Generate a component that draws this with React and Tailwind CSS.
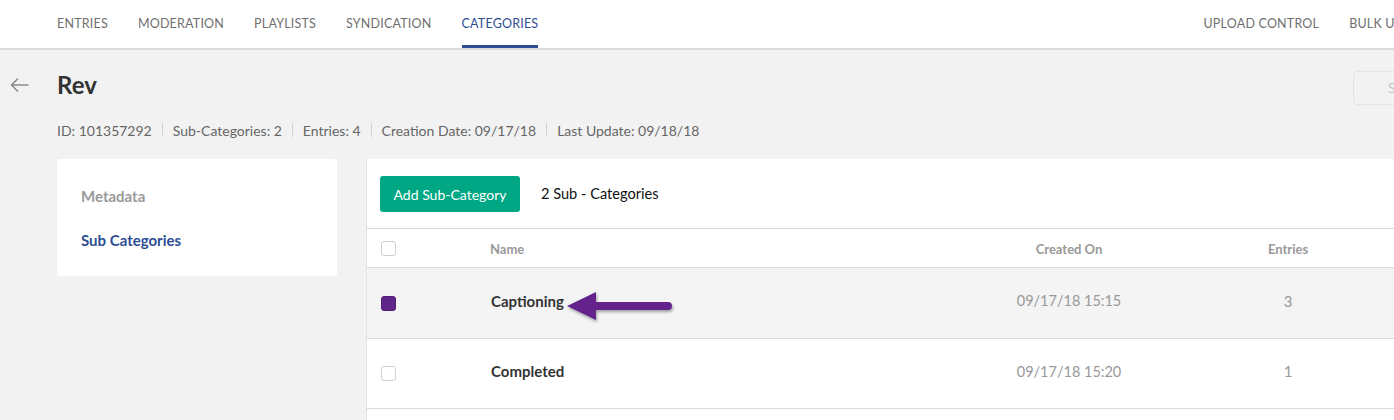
import React from "react";

function NavItem({ label, active }) {
  return (
    <div className="relative h-full flex items-center pt-[1px]">
      <span className={"text-[12.5px] tracking-[0.2px] whitespace-nowrap " + (active ? "text-[#2d4e94]" : "text-[#6f6f6f]")}>{label}</span>
      {active && <div className="absolute left-0 right-0 bottom-0 h-[3px] bg-[#2d4e94]" />}
    </div>
  );
}

function Checkbox({ checked }) {
  return checked ? (
    <div className="w-[15px] h-[15px] rounded-[3px] bg-[#5f2589] border border-[#4f1d74]" />
  ) : (
    <div className="w-[15px] h-[15px] rounded-[3px] bg-white border border-[#cfcfcf]" />
  );
}

function Row({ name, date, entries, highlight, arrow, h }) {
  return (
    <div className={"relative flex items-center border-b border-[#dcdcdc] " + h + " " + (highlight ? "bg-[#f4f4f4]" : "bg-white")}>
      <div className="w-[124px] pl-[14px] flex items-center">
        <Checkbox checked={highlight} />
      </div>
      <div className="w-[470px] pb-[4px] text-[15px] font-bold text-[#333]">{name}</div>
      <div className="w-[216px] pb-[4px] text-center text-[14.5px] text-[#999]">{date}</div>
      <div className="w-[222px] pb-[4px] text-center text-[15px] text-[#999]">{entries}</div>
      {arrow && (
        <svg className="absolute left-[198px] top-[22px]" width="112" height="36" viewBox="0 0 112 36">
          <defs>
            <filter id="sh" x="-20%" y="-40%" width="140%" height="180%">
              <feDropShadow dx="1" dy="2" stdDeviation="1.6" floodColor="#000" floodOpacity="0.35" />
            </filter>
          </defs>
          <g filter="url(#sh)">
            <path d="M2 16 L31 2 L31 12 L103 12 A4 4 0 0 1 103 20 L31 20 L31 30 Z" fill="#63238c" />
          </g>
        </svg>
      )}
    </div>
  );
}

export default function App() {
  return (
    <div className="w-[1394px] h-[420px] overflow-hidden bg-[#f2f2f2]" style={{ fontFamily: "Lato, 'Noto Sans', sans-serif" }}>
      <div className="h-[50px] bg-white border-b-2 border-[#dadada] flex items-stretch pl-[57px]">
        <div className="flex items-stretch gap-[30px]">
          <NavItem label="ENTRIES" />
          <NavItem label="MODERATION" />
          <NavItem label="PLAYLISTS" />
          <NavItem label="SYNDICATION" />
          <NavItem label="CATEGORIES" active />
        </div>
        <div className="ml-auto flex items-stretch gap-[30px] mr-[-43px]">
          <NavItem label="UPLOAD CONTROL" />
          <NavItem label="BULK UPLOAD" />
        </div>
      </div>

      <div className="relative flex items-center h-[70px]">
        <div className="w-[57px] pl-[10px] flex items-center">
          <svg width="19" height="14" viewBox="0 0 19 14" fill="none" stroke="#8c8c8c" strokeWidth="1.6" strokeLinecap="round" strokeLinejoin="round">
            <path d="M18 7 H1.5 M7.5 1 L1.5 7 L7.5 13" />
          </svg>
        </div>
        <div className="text-[24px] font-bold text-[#333] leading-none">Rev</div>
        <div className="ml-auto mr-[-20px] mt-[5px] w-[61px] h-[34px] rounded-[4px] border border-[#e4e4e4] bg-[#f2f2f2] flex items-center pl-[34px] text-[14px] text-[#c8c8c8]">S</div>
      </div>

      <div className="pl-[57px] flex items-center text-[14px] text-[#666] h-[20px]">
        <span>ID: 101357292</span>
        <span className="mx-[10px] w-px h-[14px] bg-[#d0d0d0]" />
        <span>Sub-Categories: 2</span>
        <span className="mx-[10px] w-px h-[14px] bg-[#d0d0d0]" />
        <span>Entries: 4</span>
        <span className="mx-[10px] w-px h-[14px] bg-[#d0d0d0]" />
        <span>Creation Date: 09/17/18</span>
        <span className="mx-[10px] w-px h-[14px] bg-[#d0d0d0]" />
        <span>Last Update: 09/18/18</span>
      </div>

      <div className="flex items-start pl-[57px] pt-[19px] gap-[29px]">
        <div className="w-[280px] h-[117px] bg-white rounded-[3px] pl-[24px] pt-[28px] flex flex-col gap-[26px]">
          <div className="text-[15px] font-bold text-[#999] leading-[18px]">Metadata</div>
          <div className="text-[15px] font-bold text-[#2d4e94] leading-[18px]">Sub Categories</div>
        </div>
        <div className="flex-1 bg-white border-l border-[#e2e2e2] mr-[-20px]">
          <div className="h-[70px] flex items-center pl-[13px] pt-[1px] border-b border-[#dcdcdc]">
            <button className="h-[36px] w-[140px] rounded-[3px] bg-[#00a784] text-white text-[14px]">Add Sub-Category</button>
            <span className="ml-[21px] text-[14.6px] text-[#111]">2 Sub - Categories</span>
          </div>
          <div className="flex items-center h-[39px] pt-[3px] border-b border-[#dcdcdc]">
            <div className="w-[123px] pl-[14px] flex items-center -mt-[3px]">
              <Checkbox />
            </div>
            <div className="w-[470px] text-[13px] font-bold text-[#999]">Name</div>
            <div className="w-[218px] text-center text-[13px] font-bold text-[#999]">Created On</div>
            <div className="w-[220px] text-center text-[13px] font-bold text-[#999]">Entries</div>
          </div>
          <Row name="Captioning" date="09/17/18 15:15" entries="3" highlight arrow h="h-[71px]" />
          <Row name="Completed" date="09/17/18 15:20" entries="1" h="h-[70px]" />
          <div className="h-[20px]" />
        </div>
      </div>
    </div>
  );
}
